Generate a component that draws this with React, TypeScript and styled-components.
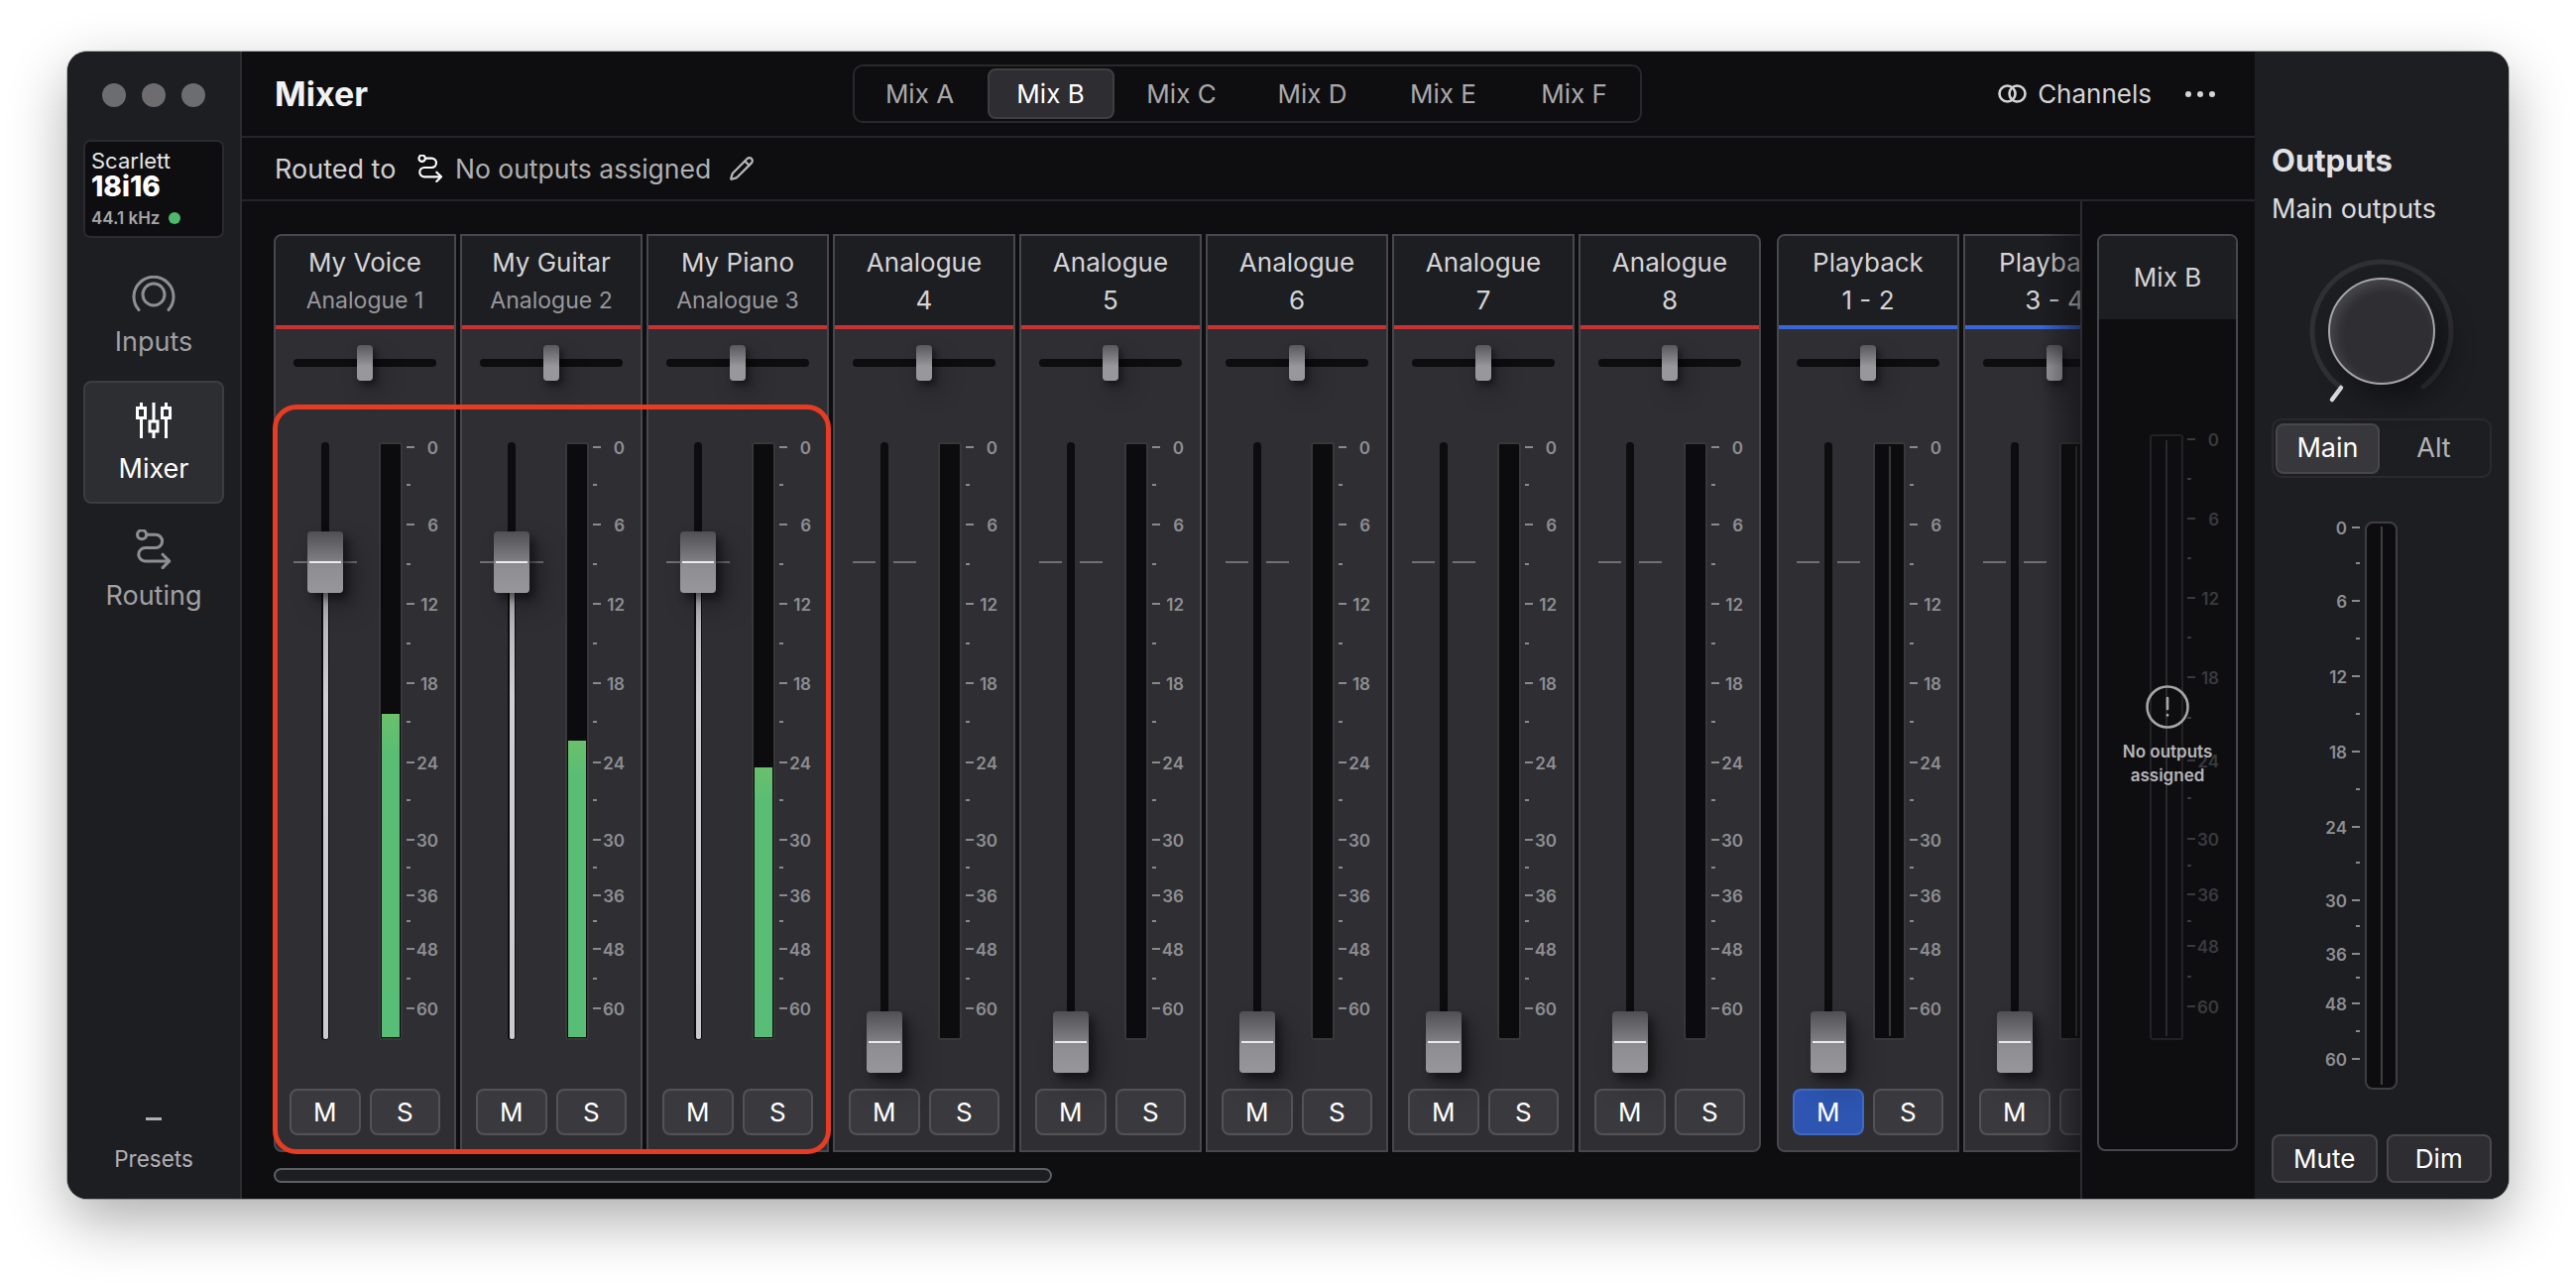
import styled, { createGlobalStyle } from 'styled-components';
import { Pencil } from 'lucide-react';

const FONT = `Inter, Lato, 'Noto Sans', sans-serif`;

const GlobalStyle = createGlobalStyle`
  html, body {
    margin: 0;
    background: #fff;
    font-family: ${FONT};
  }
  * {
    box-sizing: border-box;
  }
`;

// tick positions are measured from the top of each scale
type Tick = { y: number; label?: string };

const STRIP_TICKS: Tick[] = [
  { y: 451, label: '0' }, { y: 489 }, { y: 529, label: '6' }, { y: 569 },
  { y: 609, label: '12' }, { y: 649 }, { y: 689, label: '18' }, { y: 728 },
  { y: 769, label: '24' }, { y: 807 }, { y: 847, label: '30' }, { y: 875 },
  { y: 903, label: '36' }, { y: 929 }, { y: 957, label: '48' }, { y: 987 },
  { y: 1017, label: '60' },
];

const GHOST_TICKS: Tick[] = [
  { y: 443, label: '0' }, { y: 483 }, { y: 523, label: '6' }, { y: 563 },
  { y: 603, label: '12' }, { y: 643 }, { y: 683, label: '18' }, { y: 724 },
  { y: 767, label: '24' }, { y: 805 }, { y: 846, label: '30' }, { y: 873 },
  { y: 902, label: '36' }, { y: 929 }, { y: 954, label: '48' }, { y: 985 },
  { y: 1015, label: '60' },
];

const OUTPUT_TICKS: Tick[] = [
  { y: 531, label: '0' }, { y: 567 }, { y: 605, label: '6' }, { y: 643 },
  { y: 681, label: '12' }, { y: 719 }, { y: 757, label: '18' }, { y: 795 },
  { y: 833, label: '24' }, { y: 869 }, { y: 907, label: '30' }, { y: 933 },
  { y: 961, label: '36' }, { y: 985 }, { y: 1011, label: '48' }, { y: 1039 },
  { y: 1067, label: '60' },
];

type StripData = {
  name: string;
  sub: string;
  muted?: boolean;
  level?: number;
  stereo?: boolean;
  mute?: boolean;
};

const ANALOGUE: StripData[] = [
  { name: 'My Voice', sub: 'Analogue 1', muted: true, level: 326 },
  { name: 'My Guitar', sub: 'Analogue 2', muted: true, level: 299 },
  { name: 'My Piano', sub: 'Analogue 3', muted: true, level: 272 },
  { name: 'Analogue', sub: '4' },
  { name: 'Analogue', sub: '5' },
  { name: 'Analogue', sub: '6' },
  { name: 'Analogue', sub: '7' },
  { name: 'Analogue', sub: '8' },
];

const PLAYBACK: StripData[] = [
  { name: 'Playback', sub: '1 - 2', stereo: true, mute: true },
  { name: 'Playback', sub: '3 - 4', stereo: true },
];

const MIXES = ['Mix A', 'Mix B', 'Mix C', 'Mix D', 'Mix E', 'Mix F'];

const RoutingIcon = ({ size, color }: { size: number; color: string }) => (
  <svg width={size} height={size} viewBox="0 0 38 42" fill="none" stroke={color} strokeWidth="3.2" strokeLinecap="round" strokeLinejoin="round">
    <circle cx="6.5" cy="5.5" r="4.8" />
    <path d="M11.5 5.5H21a7 7 0 0 1 0 14H10a7 7 0 0 0 0 14h25" />
    <path d="M28.5 26.5l7 7-7 7" />
  </svg>
);

const InputsIcon = () => (
  <svg width="44" height="40" viewBox="0 0 44 40" fill="none" stroke="#8f8f92" strokeWidth="3">
    <circle cx="22" cy="19" r="11" />
    <path d="M7 34.5a20 20 0 1 1 30 0" strokeLinecap="round" />
  </svg>
);

const MixerIcon = () => (
  <svg width="36" height="40" viewBox="0 0 36 40" fill="none" stroke="#fff" strokeWidth="3">
    <path d="M5.5 0v36M18 0v36M30.5 0v36" />
    <rect x="1.5" y="5.5" width="8" height="10" fill="#2d2e32" />
    <rect x="14" y="19" width="8" height="10" fill="#2d2e32" />
    <rect x="26.5" y="5.5" width="8" height="10" fill="#2d2e32" />
  </svg>
);

const ChannelsIcon = () => (
  <svg width="29" height="19" viewBox="0 0 29 19" fill="none" stroke="#d4d4d6" strokeWidth="2.6">
    <circle cx="9.5" cy="9.5" r="8" />
    <circle cx="19.5" cy="9.5" r="8" />
  </svg>
);

const WarningIcon = () => (
  <svg width="44" height="44" viewBox="0 0 44 44" fill="none" stroke="#a6a6a8" strokeWidth="2.6" strokeLinecap="round">
    <circle cx="22" cy="22" r="20.5" />
    <path d="M22 13v11" />
    <path d="M22 30v.4" />
  </svg>
);

const Scale = ({ ticks, dim, flip }: { ticks: Tick[]; dim?: boolean; flip?: boolean }) => (
  <ScaleColumn $flip={flip} style={{ paddingTop: flip ? 5 : undefined }}>
    {ticks.map((t, i) => (
      <ScaleRow key={i} $flip={flip} style={{ height: i < ticks.length - 1 ? ticks[i + 1].y - t.y : 2 }}>
        <ScaleTick $long={!!t.label} $dim={dim} />
        {t.label && <ScaleLabel $flip={flip} $dim={dim}>{t.label}</ScaleLabel>}
      </ScaleRow>
    ))}
  </ScaleColumn>
);

const ChannelStrip = ({ strip, first, last }: { strip: StripData; first?: boolean; last?: boolean }) => {
  const top = strip.level ? 90 : 574;
  return (
    <Strip $first={first} $last={last}>
      <StripHeader>
        <StripName>{strip.name}</StripName>
        <StripSub $muted={strip.muted}>{strip.sub}</StripSub>
      </StripHeader>
      <ColorLine $stereo={strip.stereo} />
      <StripBody>
        <PanTrack>
          <PanKnob />
        </PanTrack>
        <ChannelRow>
          <FaderTrack>
            <UnityTick $side="left" $active={!!strip.level} />
            <UnityTick $side="right" $active={!!strip.level} />
            {strip.level && <FaderFill />}
            <FaderKnob style={{ top }} />
          </FaderTrack>
          <Meter $stereo={strip.stereo}>
            {strip.level && <MeterFill style={{ height: strip.level }} />}
          </Meter>
          <ScaleSlot>
            <Scale ticks={STRIP_TICKS} />
          </ScaleSlot>
        </ChannelRow>
        <ButtonRow>
          <SquareButton $on={strip.mute}>M</SquareButton>
          <SquareButton>S</SquareButton>
        </ButtonRow>
      </StripBody>
    </Strip>
  );
};

const App = () => {
  return (
    <>
      <GlobalStyle />
      <Page>
        <Window>
          <Sidebar>
            <TrafficLights>
              <TrafficLight />
              <TrafficLight />
              <TrafficLight />
            </TrafficLights>
            <DeviceCard>
              <DeviceMaker>Scarlett</DeviceMaker>
              <DeviceModel>18i16</DeviceModel>
              <DeviceRate>
                44.1 kHz <StatusDot />
              </DeviceRate>
            </DeviceCard>
            <NavItem>
              <NavIcon><InputsIcon /></NavIcon>
              <NavLabel>Inputs</NavLabel>
            </NavItem>
            <NavItem $active>
              <NavIcon><MixerIcon /></NavIcon>
              <NavLabel $active>Mixer</NavLabel>
            </NavItem>
            <NavItem>
              <NavIcon><RoutingIcon size={40} color="#8f8f92" /></NavIcon>
              <NavLabel>Routing</NavLabel>
            </NavItem>
            <Presets>
              <PresetDash />
              <PresetLabel>Presets</PresetLabel>
            </Presets>
          </Sidebar>

          <Main>
            <TopBar>
              <Title>Mixer</Title>
              <Tabs>
                {MIXES.map((m) => (
                  <Tab key={m} $active={m === 'Mix B'}>{m}</Tab>
                ))}
              </Tabs>
              <TopActions>
                <ChannelsButton>
                  <ChannelsIcon />
                  Channels
                </ChannelsButton>
                <MoreDots>
                  <Dot />
                  <Dot />
                  <Dot />
                </MoreDots>
              </TopActions>
            </TopBar>
            <RouteBar>
              <RouteLabel>Routed to</RouteLabel>
              <RoutingIcon size={28} color="#fff" />
              <RouteValue>No outputs assigned</RouteValue>
              <Pencil size={26} color="#b9b9bb" strokeWidth={2} />
            </RouteBar>
            <Body>
              <ScrollArea>
                <Groups>
                  <StripGroup>
                    {ANALOGUE.map((s, i) => (
                      <ChannelStrip key={s.sub} strip={s} first={i === 0} last={i === ANALOGUE.length - 1} />
                    ))}
                  </StripGroup>
                  <StripGroup>
                    {PLAYBACK.map((s, i) => (
                      <ChannelStrip key={s.sub} strip={s} first={i === 0} />
                    ))}
                  </StripGroup>
                </Groups>
                <Scrollbar />
                <Highlight />
                <EdgeFade />
              </ScrollArea>
              <MixPanel>
                <MixStrip>
                  <MixHeader>Mix B</MixHeader>
                  <GhostRow>
                    <GhostMeter />
                    <ScaleSlot>
                      <Scale ticks={GHOST_TICKS} dim />
                    </ScaleSlot>
                  </GhostRow>
                  <NoOutputs>
                    <WarningIcon />
                    <NoOutputsText>No outputs<br />assigned</NoOutputsText>
                  </NoOutputs>
                </MixStrip>
              </MixPanel>
            </Body>
          </Main>

          <OutputsPanel>
            <OutputsTitle>Outputs</OutputsTitle>
            <OutputsSub>Main outputs</OutputsSub>
            <KnobWrap>
              <svg width="180" height="150" viewBox="0 0 180 150" fill="none">
                <path d="M48 130A70 70 0 1 1 132 130" stroke="#303034" strokeWidth="5" strokeLinecap="round" />
                <path d="M49 131L40 143" stroke="#dcdcde" strokeWidth="4.5" strokeLinecap="round" />
              </svg>
              <Knob />
            </KnobWrap>
            <Segment>
              <SegmentItem $active>Main</SegmentItem>
              <SegmentItem>Alt</SegmentItem>
            </Segment>
            <OutputMeterRow>
              <Scale ticks={OUTPUT_TICKS} flip />
              <OutputMeter />
            </OutputMeterRow>
            <OutputButtons>
              <OutputButton>Mute</OutputButton>
              <OutputButton>Dim</OutputButton>
            </OutputButtons>
          </OutputsPanel>
        </Window>
      </Page>
    </>
  );
};

const Page = styled.div`
  width: 2598px;
  height: 1294px;
  padding: 52px 68px;
  overflow: hidden;
`;

const Window = styled.div`
  width: 2462px;
  height: 1157px;
  display: flex;
  border-radius: 20px;
  overflow: hidden;
  background: #0e0e11;
  box-shadow: 0 0 0 1px rgba(0, 0, 0, 0.25), 0 22px 60px rgba(0, 0, 0, 0.32);
`;

const Sidebar = styled.aside`
  width: 176px;
  flex-shrink: 0;
  background: #1d1e22;
  border-right: 2px solid #2c2d31;
  display: flex;
  flex-direction: column;
  align-items: center;
`;

const TrafficLights = styled.div`
  display: flex;
  gap: 16px;
  margin-top: 32px;
`;

const TrafficLight = styled.span`
  width: 24px;
  height: 24px;
  border-radius: 50%;
  background: #6d6d6f;
`;

const DeviceCard = styled.div`
  width: 142px;
  height: 99px;
  margin-top: 33px;
  margin-bottom: 16px;
  padding: 7px 6px;
  background: #0e0e10;
  border: 2px solid #2b2b2f;
  border-radius: 7px;
  color: #fff;
`;

const DeviceMaker = styled.div`
  font-size: 22px;
  line-height: 24px;
  color: #e6e6e8;
`;

const DeviceModel = styled.div`
  font-size: 28px;
  line-height: 28px;
  font-weight: 800;
`;

const DeviceRate = styled.div`
  display: flex;
  align-items: center;
  gap: 9px;
  margin-top: 8px;
  font-size: 17px;
  line-height: 20px;
  font-weight: 600;
  color: #a6a6a8;
`;

const StatusDot = styled.span`
  width: 12px;
  height: 12px;
  border-radius: 50%;
  background: #4fb96b;
`;

const NavItem = styled.div<{ $active?: boolean }>`
  width: 142px;
  height: 124px;
  margin-bottom: 4px;
  padding-top: 20px;
  display: flex;
  flex-direction: column;
  align-items: center;
  border-radius: 8px;
  border: 2px solid ${(p) => (p.$active ? '#3c3d41' : 'transparent')};
  background: ${(p) => (p.$active ? '#2d2e32' : 'transparent')};
`;

const NavIcon = styled.div`
  height: 40px;
  display: flex;
  align-items: flex-start;
  justify-content: center;
`;

const NavLabel = styled.div<{ $active?: boolean }>`
  margin-top: 9px;
  font-size: 27px;
  line-height: 36px;
  color: ${(p) => (p.$active ? '#fff' : '#a0a0a3')};
`;

const Presets = styled.div`
  margin-top: auto;
  padding-bottom: 25px;
  display: flex;
  flex-direction: column;
  align-items: center;
`;

const PresetDash = styled.span`
  width: 16px;
  height: 3px;
  margin-bottom: 24px;
  background: #b0b0b3;
`;

const PresetLabel = styled.div`
  font-size: 22.5px;
  line-height: 30px;
  color: #b0b0b3;
`;

const Main = styled.main`
  flex: 1;
  min-width: 0;
  display: flex;
  flex-direction: column;
`;

const TopBar = styled.header`
  height: 87px;
  flex-shrink: 0;
  display: grid;
  grid-template-columns: 1fr auto 1fr;
  align-items: center;
  padding: 0 36px 0 33px;
  border-bottom: 2px solid #26262a;
`;

const Title = styled.h1`
  margin: 0;
  font-size: 34px;
  font-weight: 700;
  color: #f2f2f4;
`;

const Tabs = styled.nav`
  display: flex;
  gap: 4px;
  height: 59px;
  padding: 2px;
  align-items: center;
  border: 2px solid #29292d;
  border-radius: 10px;
`;

const Tab = styled.div<{ $active?: boolean }>`
  width: 128px;
  height: 51px;
  display: flex;
  align-items: center;
  justify-content: center;
  font-size: 26px;
  border-radius: 8px;
  color: ${(p) => (p.$active ? '#fff' : '#a8a8aa')};
  border: 2px solid ${(p) => (p.$active ? '#3f3f43' : 'transparent')};
  background: ${(p) => (p.$active ? '#2e2e32' : 'transparent')};
`;

const TopActions = styled.div`
  display: flex;
  align-items: center;
  justify-content: flex-end;
  gap: 34px;
  padding-right: 4px;
`;

const ChannelsButton = styled.div`
  display: flex;
  align-items: center;
  gap: 11px;
  font-size: 26px;
  color: #d4d4d6;
`;

const MoreDots = styled.div`
  display: flex;
  gap: 6px;
`;

const Dot = styled.span`
  width: 6px;
  height: 6px;
  border-radius: 50%;
  background: #d4d4d6;
`;

const RouteBar = styled.div`
  height: 64px;
  flex-shrink: 0;
  display: flex;
  align-items: center;
  padding-left: 33px;
  border-bottom: 2px solid #26262a;
`;

const RouteLabel = styled.span`
  font-size: 27px;
  color: #d0d0d2;
  width: 143px;
`;

const RouteValue = styled.span`
  font-size: 26.5px;
  color: #b0b0b2;
  margin: 0 18px 0 11px;
`;

const Body = styled.div`
  flex: 1;
  min-height: 0;
  display: flex;
`;

const ScrollArea = styled.div`
  position: relative;
  width: 1854px;
  flex-shrink: 0;
  padding: 33px 0 0 32px;
  overflow: hidden;
`;

const Groups = styled.div`
  display: flex;
  gap: 16px;
  width: max-content;
`;

const StripGroup = styled.div`
  display: flex;
  gap: 4px;
`;

const Strip = styled.section<{ $first?: boolean; $last?: boolean }>`
  width: 184px;
  height: 926px;
  flex-shrink: 0;
  display: flex;
  flex-direction: column;
  overflow: hidden;
  background: #2e2e33;
  border: 2px solid #48484c;
  border-radius: ${(p) => {
    const l = p.$first ? '8px' : '0';
    const r = p.$last ? '8px' : '0';
    return `${l} ${r} ${r} ${l}`;
  }};
`;

const StripHeader = styled.div`
  height: 90px;
  flex-shrink: 0;
  padding-top: 8px;
  text-align: center;
  background: #1d1e22;
`;

const StripName = styled.div`
  font-size: 26px;
  line-height: 38px;
  color: #d4d4d6;
  white-space: nowrap;
`;

const StripSub = styled.div<{ $muted?: boolean }>`
  font-size: ${(p) => (p.$muted ? '23px' : '26px')};
  line-height: 38px;
  color: ${(p) => (p.$muted ? '#98989b' : '#d4d4d6')};
  white-space: nowrap;
`;

const ColorLine = styled.div<{ $stereo?: boolean }>`
  height: 4px;
  flex-shrink: 0;
  background: ${(p) => (p.$stereo ? '#3a66dc' : '#c93232')};
`;

const StripBody = styled.div`
  flex: 1;
  display: flex;
  flex-direction: column;
`;

const PanTrack = styled.div`
  position: relative;
  width: 144px;
  height: 8px;
  margin: 30px auto 76px;
  border-radius: 4px;
  background: #0d0d0f;
`;

const PanKnob = styled.div`
  position: absolute;
  left: 64px;
  top: -14px;
  width: 16px;
  height: 36px;
  border-radius: 4px;
  background: linear-gradient(#58585c, #98989c 60%, #98989c);
  box-shadow: 3px 4px 6px rgba(0, 0, 0, 0.45), 8px 12px 22px rgba(0, 0, 0, 0.25);
`;

const ChannelRow = styled.div`
  display: flex;
  height: 603px;
  padding-left: 46px;
`;

const FaderTrack = styled.div`
  position: relative;
  width: 8px;
  height: 100%;
  flex-shrink: 0;
  border-radius: 4px;
  background: #0d0d0f;
`;

const UnityTick = styled.span<{ $side: 'left' | 'right'; $active: boolean }>`
  position: absolute;
  top: 120px;
  height: 2px;
  width: ${(p) => (p.$active ? '28px' : '23px')};
  background: #707074;
  ${(p) => (p.$side === 'left' ? 'left: -28px;' : 'right: -28px;')}
`;

const FaderFill = styled.div`
  position: absolute;
  left: 1.5px;
  right: 1.5px;
  top: 140px;
  bottom: 1px;
  border-radius: 2px;
  background: linear-gradient(#a9a9ac, #cfcfd1 25%, #cbcbcd);
`;

const FaderKnob = styled.div`
  position: absolute;
  left: -14px;
  width: 36px;
  height: 62px;
  border-radius: 4px;
  background: linear-gradient(#505054, #7c7c80 45%, #8e8e92 55%, #97979b);
  box-shadow: 5px 6px 8px rgba(0, 0, 0, 0.45), 12px 14px 26px rgba(0, 0, 0, 0.25);

  &::after {
    content: '';
    position: absolute;
    left: 2px;
    right: 2px;
    top: 30px;
    height: 2px;
    background: #ececee;
  }
`;

const Meter = styled.div<{ $stereo?: boolean }>`
  position: relative;
  width: ${(p) => (p.$stereo ? '33px' : '24px')};
  height: 100%;
  margin-left: ${(p) => (p.$stereo ? '41px' : '50px')};
  padding: 1px;
  display: flex;
  flex-direction: column;
  justify-content: flex-end;
  flex-shrink: 0;
  background: #0c0c0e;
  border: 2px solid #38383b;
  border-radius: 3px;

  ${(p) =>
    p.$stereo &&
    `&::after {
      content: '';
      position: absolute;
      left: 13.5px;
      top: 2px;
      bottom: 2px;
      width: 2px;
      background: #38383b;
    }`}
`;

const MeterFill = styled.div`
  background: linear-gradient(#6ac06c, #5abd74 12%, #58bd76);
`;

const ScaleSlot = styled.div`
  width: 32px;
  margin-left: 4px;
  padding-top: 4px;
  flex-shrink: 0;
`;

const ScaleColumn = styled.div<{ $flip?: boolean }>`
  width: ${(p) => (p.$flip ? '60px' : '100%')};
`;

const ScaleRow = styled.div<{ $flip?: boolean }>`
  display: flex;
  flex-direction: ${(p) => (p.$flip ? 'row-reverse' : 'row')};
  align-items: flex-start;
`;

const ScaleTick = styled.span<{ $long: boolean; $dim?: boolean }>`
  width: ${(p) => (p.$long ? '8px' : '4px')};
  height: 2px;
  flex-shrink: 0;
  background: ${(p) => (p.$dim ? '#3a3a3d' : '#8a8a8d')};
`;

const ScaleLabel = styled.span<{ $flip?: boolean; $dim?: boolean }>`
  font-size: 17px;
  font-weight: 600;
  line-height: 0;
  margin-top: 2px;
  color: ${(p) => (p.$dim ? '#3a3a3d' : '#8e8e91')};
  ${(p) => (p.$flip ? 'margin-right: 5px;' : 'margin-left: auto;')}
`;

const ButtonRow = styled.div`
  display: flex;
  gap: 9px;
  margin-top: 49px;
  padding: 0 14px;
`;

const SquareButton = styled.button<{ $on?: boolean }>`
  flex: 1;
  height: 47px;
  padding: 0;
  font-family: ${FONT};
  font-size: 26px;
  color: #fff;
  border-radius: 8px;
  border: 2px solid ${(p) => (p.$on ? '#3f6ac5' : '#535357')};
  background: ${(p) => (p.$on ? '#2d55b1' : '#3a3a3e')};
`;

const Scrollbar = styled.div`
  width: 785px;
  height: 15px;
  margin-top: 16px;
  border-radius: 8px;
  background: #1d1e22;
  border: 2px solid #5f5f63;
`;

const Highlight = styled.div`
  position: absolute;
  left: 31px;
  top: 205px;
  width: 563px;
  height: 756px;
  border: 5px solid #e63c23;
  border-radius: 24px;
  pointer-events: none;
`;

const EdgeFade = styled.div`
  position: absolute;
  right: 0;
  top: 0;
  bottom: 0;
  width: 40px;
  background: linear-gradient(to right, rgba(14, 14, 17, 0), rgba(14, 14, 17, 0.55));
`;

const MixPanel = styled.div`
  flex: 1;
  padding: 33px 0 0 15px;
  border-left: 2px solid #2c2c30;
`;

const MixStrip = styled.section`
  position: relative;
  width: 142px;
  height: 925px;
  border: 2px solid #48484c;
  border-radius: 8px;
  overflow: hidden;
`;

const MixHeader = styled.div`
  height: 84px;
  padding-bottom: 2px;
  display: flex;
  align-items: center;
  justify-content: center;
  font-size: 26px;
  color: #d4d4d6;
  background: #1d1e22;
`;

const GhostRow = styled.div`
  display: flex;
  height: 611px;
  margin-top: 116px;
  padding-left: 51px;
`;

const GhostMeter = styled.div`
  position: relative;
  width: 34px;
  height: 100%;
  flex-shrink: 0;
  border: 2px solid #222226;
  border-radius: 3px;

  &::after {
    content: '';
    position: absolute;
    left: 14px;
    top: 4px;
    bottom: 2px;
    width: 2px;
    background: #2a2a2e;
  }
`;

const NoOutputs = styled.div`
  position: absolute;
  left: 0;
  right: 0;
  top: 453px;
  display: flex;
  flex-direction: column;
  align-items: center;
  gap: 11px;
`;

const NoOutputsText = styled.div`
  font-size: 17px;
  font-weight: 600;
  line-height: 24px;
  text-align: center;
  color: #b5b5b7;
`;

const OutputsPanel = styled.aside`
  width: 256px;
  flex-shrink: 0;
  display: flex;
  flex-direction: column;
  padding: 91px 17px 0;
  background: #1d1e22;
`;

const OutputsTitle = styled.div`
  font-size: 31px;
  line-height: 38px;
  font-weight: 700;
  color: #e2e2e4;
`;

const OutputsSub = styled.div`
  margin-top: 12px;
  font-size: 27px;
  line-height: 36px;
  color: #dcdcde;
`;

const KnobWrap = styled.div`
  position: relative;
  width: 180px;
  height: 150px;
  margin: 31px 0 0 21px;
`;

const Knob = styled.div`
  position: absolute;
  left: 36px;
  top: 20px;
  width: 108px;
  height: 108px;
  border-radius: 50%;
  background: #2e2e33;
  border: 2px solid #a6a6a9;
  box-shadow: inset 5px 5px 12px rgba(255, 255, 255, 0.12), 14px 16px 28px rgba(0, 0, 0, 0.4);
`;

const Segment = styled.div`
  display: flex;
  width: 222px;
  height: 60px;
  margin-top: 12px;
  padding: 2px;
  align-items: center;
  border: 2px solid #2a2a2e;
  border-radius: 10px;
`;

const SegmentItem = styled.div<{ $active?: boolean }>`
  width: ${(p) => (p.$active ? '106px' : '110px')};
  height: 51px;
  padding-bottom: 2px;
  display: flex;
  align-items: center;
  justify-content: center;
  font-size: 27px;
  border-radius: 8px;
  color: ${(p) => (p.$active ? '#fff' : '#b4b4b6')};
  border: 2px solid ${(p) => (p.$active ? '#48484c' : 'transparent')};
  background: ${(p) => (p.$active ? '#38383c' : 'transparent')};
`;

const OutputMeterRow = styled.div`
  display: flex;
  height: 573px;
  margin-top: 44px;
  margin-left: 29px;
  gap: 5px;
`;

const OutputMeter = styled.div`
  position: relative;
  width: 33px;
  height: 100%;
  background: #0d0d0f;
  border: 2px solid #3f3f43;
  border-radius: 8px;

  &::after {
    content: '';
    position: absolute;
    left: 13.5px;
    top: 3px;
    bottom: 3px;
    width: 2px;
    background: #3f3f43;
  }
`;

const OutputButtons = styled.div`
  display: flex;
  gap: 9px;
  margin-top: 45px;
`;

const OutputButton = styled.button`
  flex: 1;
  height: 49px;
  padding: 0;
  font-family: ${FONT};
  font-size: 26px;
  color: #fff;
  background: #2e2e32;
  border: 2px solid #48484c;
  border-radius: 8px;
`;

export default App;
